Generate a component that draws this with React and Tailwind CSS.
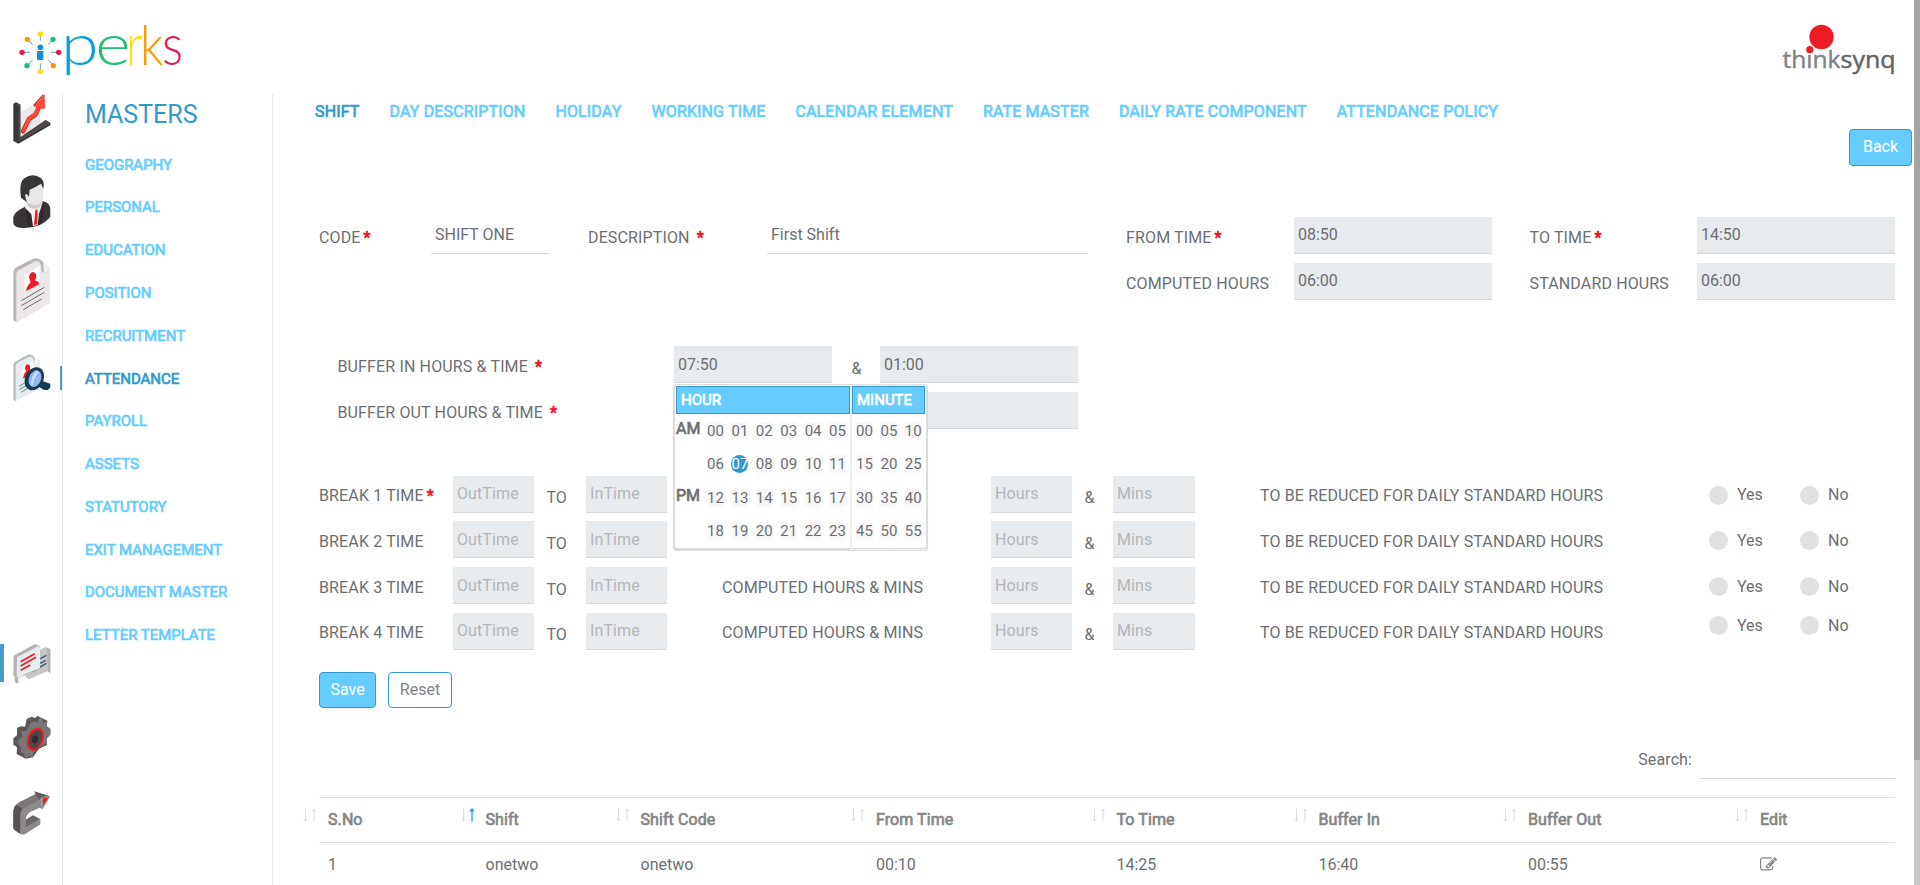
const fauxBold = "font-normal [-webkit-text-stroke:0.7px_currentColor]";

const menu = [
  "GEOGRAPHY", "PERSONAL", "EDUCATION", "POSITION", "RECRUITMENT", "ATTENDANCE",
  "PAYROLL", "ASSETS", "STATUTORY", "EXIT MANAGEMENT", "DOCUMENT MASTER", "LETTER TEMPLATE",
];

const tabs = [
  "SHIFT", "DAY DESCRIPTION", "HOLIDAY", "WORKING TIME", "CALENDAR ELEMENT",
  "RATE MASTER", "DAILY RATE COMPONENT", "ATTENDANCE POLICY",
];

function PerksLogo() {
  const nodes = [
    [121, 102, "#ffdd15", 121, 122], [159, 118, "#1fbf75", 144, 134],
    [176, 157, "#e6194b", 153, 157], [160, 197, "#ff9800", 146, 181],
    [121, 214, "#ffdd15", 121, 190], [81, 197, "#1fbf75", 97, 181],
    [66, 157, "#e6194b", 90, 157], [82, 118, "#ff9800", 98, 134],
  ];
  return (
    <svg className="h-[84px] w-[170px]" viewBox="54 0 510 252">
      {nodes.map(([x, y, c, a, b]) => (
        <g key={`${x}-${y}`}>
          <line x1={x} y1={y} x2={a} y2={b} stroke="#3f7fd0" strokeWidth="2.5" />
          <circle cx={x} cy={y} r="8" fill={c} />
        </g>
      ))}
      <circle cx="121" cy="142" r="8.5" fill="#1c8ad6" />
      <rect x="111" y="153" width="19" height="27" rx="3" fill="#1c8ad6" />
      <g fontFamily="Lato" fontWeight="300" fontSize="173">
        <text x="183" y="194" fill="#0d9ddb" textLength="113" lengthAdjust="spacingAndGlyphs">p</text>
        <text x="286" y="194" fill="#1fbf75" textLength="106" lengthAdjust="spacingAndGlyphs">e</text>
        <text x="378" y="195" fill="#ffdd15" textLength="50" lengthAdjust="spacingAndGlyphs">r</text>
        <text x="420" y="195" fill="#ff9800" fontSize="163" textLength="70" lengthAdjust="spacingAndGlyphs">k</text>
        <text x="486" y="194" fill="#e6194b" textLength="63" lengthAdjust="spacingAndGlyphs">s</text>
      </g>
    </svg>
  );
}

function ThinksynqLogo() {
  return (
    <svg className="h-[56px] w-[116px]" viewBox="0 0 116 56">
      <circle cx="40.5" cy="17" r="12.2" fill="#ed1c24" />
      <g fontFamily="Open Sans" fontSize="24">
        <text x="1.5" y="48" fill="#808285" stroke="#808285" strokeWidth="0.4" textLength="58" lengthAdjust="spacingAndGlyphs">thınk</text>
        <text x="59.5" y="48" fill="#636569" stroke="#636569" strokeWidth="0.5" textLength="55" lengthAdjust="spacingAndGlyphs">synq</text>
      </g>
      <circle cx="28.8" cy="29.7" r="3.6" fill="#ed1c24" />
    </svg>
  );
}

function ChartIcon() {
  return (
    <svg className="h-[50px] w-[38px]" viewBox="38 282 114 150">
      <path d="M58 337 L120 305 V384 L58 416Z" fill="#ece8ea" />
      <path d="M39 311 L47 307 L60 314 V412 L136 360 L150 369 V376 L54 431 L39 423Z" fill="#3b3638" />
      <path d="M47 307 L60 314 V411 L54 415 V319 L41 311Z" fill="#4d4749" />
      <path d="M54 416 L136 361 L150 369 L55 425Z" fill="#514b4d" />
      <path d="M68 394 L86 357 L106 343 L117 318" fill="none" stroke="#c93428" strokeWidth="14" strokeLinejoin="round" strokeLinecap="round" />
      <path d="M70 391 L87 354 L107 340 L118 314" fill="none" stroke="#ff4a38" strokeWidth="10" strokeLinejoin="round" strokeLinecap="round" />
      <path d="M102 320 L133 283 L134 325 L127 327Z" fill="#ff4a38" />
      <path d="M102 320 L131 284 L126 284 L99 314Z" fill="#c93428" />
    </svg>
  );
}

function PersonIcon() {
  return (
    <svg className="h-[54px] w-[38px]" viewBox="38 524 114 162">
      <path d="M39 651 Q42 633 78 618 L128 603 Q150 606 150 630 V650 Q122 683 72 683 Q39 683 39 668Z" fill="#393436" />
      <path d="M79 606 L126 596 L124 632 L112 674 L94 678 L74 624Z" fill="#f5f3f4" />
      <path d="M76 568 Q100 542 130 548 L129 590 Q122 617 104 617 Q84 610 74 590Z" fill="#e9e6e7" />
      <path d="M76 598 Q92 622 120 610 L126 602 V612 Q112 634 84 620Z" fill="#cfcbcd" />
      <path d="M62 592 Q55 545 72 534 Q98 516 122 534 Q133 543 129 565 L122 550 Q110 558 88 568 L86 590 Q78 574 74 586 L80 606Z" fill="#393436" />
      <path d="M105 629 L111 627 L112 640 L110 672 L101 674 L104 642Z" fill="#ed1c24" />
      <path d="M74 622 L93 642 L98 678 L84 680Z M126 610 L116 640 L112 674 L124 670 L132 620Z" fill="#2f2b2d" />
    </svg>
  );
}

function ProfileIcon() {
  return (
    <svg className="h-[65px] w-[38px]" viewBox="38 56 114 195">
      <path d="M39 100 Q39 89 50 83 L98 58 Q115 54 128 68 L132 98 L60 238 L50 249 L39 243Z" fill="#bab6b8" />
      <path d="M48 104 Q48 97 56 92 L104 66 Q120 64 122 80 L124 101 L148 90 V192 L52 248 Q48 248 48 242Z" fill="#ebe7e9" />
      <path d="M130 70 L150 88 L133 102 Q129 100 130 90Z" fill="#f3f1f2" stroke="#cfcbcd" strokeWidth="1.5" />
      <path d="M73 106 L118 80 V134 L73 158Z" fill="#fff" />
      <ellipse cx="97" cy="112" rx="10.500" ry="14" transform="rotate(14 97 112)" fill="#ed1c24" />
      <path d="M77 156 Q80 134 97 126 Q112 120 117 134Z" fill="#ed1c24" />
      <path d="M90 120 H104 V132 H90Z" fill="#ed1c24" />
      <path d="M63 184 L132 144 M63 199 L132 159 M69 211 L124 179" stroke="#6e6a6c" strokeWidth="3" />
    </svg>
  );
}

function SearchProfileIcon() {
  return (
    <svg className="h-[48px] w-[38px]" viewBox="38 341 114 144">
      <path d="M39 374 Q39 366 48 362 L82 343 Q98 340 105 356 L60 470 L46 483 L39 478Z" fill="#b5bfc2" />
      <path d="M46 378 Q46 370 54 366 L86 350 Q100 348 101 366 L119 360 V446 L46 482Z" fill="#e6edef" />
      <path d="M106 352 L120 362 L106 374Z" fill="#f2f5f6" />
      <path d="M65 378 L97 360 V396 L65 414Z" fill="#fff" />
      <ellipse cx="82" cy="382" rx="7.500" ry="10.500" fill="#ed1c24" />
      <path d="M68 414 Q71 394 82 390 L92 394 L88 410Z" fill="#ed1c24" />
      <path d="M57 438 L76 426 M57 448 L80 434 M62 456 L80 445" stroke="#5c8791" strokeWidth="3" />
      <path d="M119 420 L150 430 V442 L141 450 L130 448 L110 436Z" fill="#173b4d" />
      <ellipse cx="104" cy="415" rx="26" ry="35" transform="rotate(22 104 415)" fill="#1f4459" />
      <ellipse cx="100" cy="416" rx="26" ry="35" transform="rotate(22 100 416)" fill="#173b4d" />
      <ellipse cx="104" cy="415" rx="18" ry="26" transform="rotate(22 104 415)" fill="#8fb4f0" />
      <path d="M91 432 Q91 410 108 392 L116 396 Q100 414 97 438Z" fill="#c3dbff" />
    </svg>
  );
}

function ChatIcon() {
  return (
    <svg className="h-[40px] w-[38px]" viewBox="38 492 114 120">
      <path d="M76 530 L136 501 L150 508 V580 L140 574 L86 598 L75 590Z" fill="#c6c6c6" />
      <path d="M139 503 L150 508 V580 L143 574Z" fill="#b2b2b2" />
      <path d="M120 536 L138 526 M120 550 L136 541 M96 575 L138 550" stroke="#36617f" strokeWidth="4.500" />
      <path d="M40 527 L104 492 L119 498 V566 L62 590 L53 611 L43 606 V590 L39 586Z" fill="#b4b4b4" />
      <path d="M50 532 L115 498 Q119 498 119 503 V564 L72 583 Q62 588 58 602 L53 611 V592 L49 588Z" fill="#e4ecee" />
      <path d="M61 545 L103 521 M61 558 L107 532 M61 571 L90 555" stroke="#ed1c24" strokeWidth="5" />
    </svg>
  );
}

function GearIcon() {
  return (
    <svg className="h-[43px] w-[38px]" viewBox="38 708 114 129">
      <path d="M79 717 L94 710 L104 714 L112 708 L141 722 L139 739 L150 746 V764 L138 776 L140 795 L116 806 L98 832 L76 836 L49 822 L50 802 L39 794 V775 L50 766 L50 743 L63 739 L74 740Z" fill="#5c585a" />
      <path d="M92 728 L103 723 L109 729 L118 713 L127 714 L128 729 L141 724 L139 740 L150 748 V764 L139 774 L140 790 L127 796 L116 804 L100 818 L96 834 L87 826 L76 836 L70 818 L60 820 L62 803 L54 792 L54 780 L66 770 L63 754 L78 752Z" fill="#7a7577" />
      <ellipse cx="105" cy="778" rx="24" ry="36" transform="rotate(22 105 778)" fill="#ed1c24" />
      <ellipse cx="105" cy="778" rx="18" ry="29" transform="rotate(22 105 778)" fill="#4b4749" />
      <ellipse cx="104" cy="778" rx="9" ry="12" transform="rotate(22 104 778)" fill="#2f2b2d" />
    </svg>
  );
}

function ExitIcon() {
  return (
    <svg className="h-[44px] w-[38px]" viewBox="38 932 114 132">
      <path d="M39 996 Q40 974 58 965 L106 941 L122 957 L88 996 Q76 1004 76 1018 V1060 Q64 1064 56 1058 L42 1048 Q39 1046 39 1040Z" fill="#7b7678" />
      <path d="M39 996 Q40 980 47 974 L66 985 Q60 992 60 1002 V1060 L42 1048 Q39 1046 39 1040Z" fill="#575254" />
      <path d="M60 1002 Q62 986 78 979 L122 957 L126 987 L118 982 L88 996 Q76 1004 76 1018 V1036 L120 1016 V1032 L76 1060 Q66 1063 60 1060Z" fill="#8e898b" />
      <path d="M76 1018 L98 1005 L120 1016 L76 1040Z" fill="#6a6567" />
      <path d="M102 933 L150 948 L126 950 L118 958 L106 943Z" fill="#5e595b" />
      <path d="M150 948 L126 987 L122 950Z" fill="#8e898b" />
      <path d="M129 952 L143 954 L128 975Z" fill="#ed1c24" />
    </svg>
  );
}

function EditIcon() {
  return (
    <svg className="h-[17px] w-[17px]" viewBox="0 0 1792 1792" fill="#868686">
      <path d="M888 1184l116-116-152-152-116 116v56h96v96h56zm440-720q-16-16-33 1l-350 350q-17 17-1 33t33-1l350-350q17-17 1-33zm80 594v190q0 119-84.500 203.500t-203.500 84.500h-832q-119 0-203.500-84.500t-84.500-203.500v-832q0-119 84.500-203.500t203.500-84.500h832q63 0 117 25 15 7 18 23 3 17-9 29l-49 49q-14 14-32 8-23-6-45-6h-832q-66 0-113 47t-47 113v832q0 66 47 113t113 47h832q66 0 113-47t47-113v-126q0-13 9-22l64-64q15-15 35-7t20 29zm-96-738l288 288-672 672h-288v-288zm444 132l-92 92-288-288 92-92q28-28 68-28t68 28l152 152q28 28 28 68t-28 68z" />
    </svg>
  );
}

function IconRail() {
  return (
    <aside className="flex w-[63px] shrink-0 flex-col border-r border-[#e8e8e8]">
      <div className="pl-[13px]"><ChartIcon /></div>
      <div className="mt-[31px] pl-[13px]"><PersonIcon /></div>
      <div className="mt-[29px] pl-[13px]"><ProfileIcon /></div>
      <div className="mt-[31px] flex items-center justify-between pl-[13px]">
        <SearchProfileIcon />
        <span className="h-6 w-0.5 bg-[#4a9cc8]" />
      </div>
      <div className="mt-[242px] flex items-start">
        <span className="mr-[9px] h-[38px] w-1 bg-[#4a9cc8]" />
        <ChatIcon />
      </div>
      <div className="mt-[32px] pl-[13px]"><GearIcon /></div>
      <div className="mt-[32px] pl-[13px]"><ExitIcon /></div>
    </aside>
  );
}

function Star({ gap }) {
  return <span className={`${fauxBold} ${gap ? "ml-[7px]" : "ml-[3px]"} text-[#f01020]`}>*</span>;
}

function Label({ w, children, star, gap, top = "pt-[9px]" }) {
  return (
    <div className={`${w} ${top} shrink-0 tracking-[0.140px] whitespace-nowrap`}>
      {children}
      {star && <Star gap={gap} />}
    </div>
  );
}

function Box({ w, children, placeholder, plain, top = "pt-[6px]" }) {
  return (
    <div
      className={`${w} ${top} h-[37px] shrink-0 border-b border-[#d5d8da] pl-[4px] whitespace-nowrap ${plain ? "" : "bg-[#e8ebee]"} ${placeholder ? "tracking-[0.100px] text-[#b3b7bb]" : ""}`}
    >
      {children}
    </div>
  );
}

function Radio({ label, w }) {
  return (
    <span className={`${w} flex items-center gap-[9px]`}>
      <span className="h-[19px] w-[19px] rounded-full bg-[#e1e1e1]" />
      {label}
    </span>
  );
}

const hourRows = [
  ["AM", ["00", "01", "02", "03", "04", "05"]],
  ["", ["06", "07", "08", "09", "10", "11"]],
  ["PM", ["12", "13", "14", "15", "16", "17"]],
  ["", ["18", "19", "20", "21", "22", "23"]],
];
const minuteRows = [["00", "05", "10"], ["15", "20", "25"], ["30", "35", "40"], ["45", "50", "55"]];

function Cell({ value, on }) {
  return (
    <span className={`flex h-[18px] w-[17px] justify-center text-[15px] leading-[18px] ${on ? "rounded-full bg-[#3399cc] text-white" : "bg-[#f8f8f8]"}`}>
      {value}
    </span>
  );
}

function PickerHead({ children }) {
  return (
    <div className="mb-2 h-7 shrink-0 border border-[#3399cc] bg-[#66ccff] pl-[4px] text-[15px] leading-[26px] font-normal text-white [-webkit-text-stroke:0.7px_currentColor]">
      {children}
    </div>
  );
}

function TimePicker() {
  return (
    <div className="absolute top-[38px] left-0 z-10 flex h-[165px] w-[253px] gap-0.5 rounded-[3px] border border-[#dcdcdc] bg-white p-px pb-0 shadow-[0_1px_1px_1px_#d9d9d9]">
      <div className="flex h-[163px] w-[174px] flex-col">
        <PickerHead>HOUR</PickerHead>
        {hourRows.map(([tag, row]) => (
          <div key={row[0]} className="flex h-[33.400px] shrink-0 last:h-[26px]">
            <span className={`-mt-[5px] w-[31px] ${fauxBold}`}>{tag}</span>
            <div className="flex gap-[7.400px]">
              {row.map((v) => <Cell key={v} value={v} on={v === "07"} />)}
            </div>
          </div>
        ))}
      </div>
      <div className="flex h-[163px] w-[73px] flex-col shadow-[-1px_0_0_1px_#f0f0f0]">
        <PickerHead>MINUTE</PickerHead>
        {minuteRows.map((row) => (
          <div key={row[0]} className="flex h-[33.400px] shrink-0 gap-[7.400px] pl-[4px] last:h-[26px]">
            {row.map((v) => <Cell key={v} value={v} />)}
          </div>
        ))}
      </div>
    </div>
  );
}

function BreakRow({ n }) {
  return (
    <div className="flex h-[45.800px] items-start">
      <Label w="w-[134px]" top="pt-[8.600px]" star={n === 1}>BREAK {n} TIME</Label>
      <Box w="w-[81px]" top="pt-[6.500px]" placeholder>OutTime</Box>
      <div className="w-[52px] pt-[10.600px] pl-[12.500px]">TO</div>
      <Box w="w-[81px]" top="pt-[6.500px]" placeholder>InTime</Box>
      <Label w="w-[324px] pl-[55px]" top="pt-[8.600px]">{n > 2 && <>COMPUTED HOURS &amp; MINS</>}</Label>
      <Box w="w-[81px]" top="pt-[6.500px]" placeholder>Hours</Box>
      <div className="w-[41px] pt-[10.600px] pl-[12.500px]">&amp;</div>
      <Box w="w-[82px]" top="pt-[6.500px]" placeholder>Mins</Box>
      <Label w="w-[514px] pl-[65px]" top="pt-[8.600px]">TO BE REDUCED FOR DAILY STANDARD HOURS</Label>
      <div className={`flex ${n === 4 ? "pt-[1px]" : "pt-[7.700px]"}`}>
        <Radio w="w-[91px]" label="Yes" />
        <Radio w="w-[67px]" label="No" />
      </div>
    </div>
  );
}

function SortMark({ active }) {
  return (
    <svg className="-mt-[9px] mr-[11px] h-[14px] w-[14px] shrink-0" viewBox="0 0 14 14" fill="none">
      <path d="M2.500 0.500 V13 M0.500 10.500 L2.500 13 L4.500 10.500" stroke="#dcdcdc" />
      <path d="M11 13.500 V1 M9 3.500 L11 1 L13 3.500" stroke={active ? "#3399cc" : "#dcdcdc"} strokeWidth={active ? 1.3 : 1} />
    </svg>
  );
}

const columns = [
  ["S.No", "1", "w-[157.500px]"],
  ["Shift", "onetwo", "w-[155px]"],
  ["Shift Code", "onetwo", "w-[235.500px]"],
  ["From Time", "00:10", "w-[240.500px]"],
  ["To Time", "14:25", "w-[202px]"],
  ["Buffer In", "16:40", "w-[209.500px]"],
  ["Buffer Out", "00:55", "w-[232px]"],
  ["Edit", null, "w-[134px]"],
];

export default function App() {
  return (
    <div className="flex h-[885px] w-full overflow-hidden bg-white font-[Roboto,sans-serif] text-[16px] leading-6 text-[#6c6f72]">
      <div className="flex min-w-0 flex-1 flex-col">
        <header className="flex h-[94px] shrink-0 items-start justify-between pr-[17px] pl-[18px]">
          <PerksLogo />
          <div className="pt-[20px]"><ThinksynqLogo /></div>
        </header>
        <div className="flex min-h-0 flex-1">
          <IconRail />
          <nav className="flex w-[210px] shrink-0 flex-col border-r border-[#e8e8e8] pl-[22px] whitespace-nowrap">
            <h1 className="mt-[5px] mb-[16.700px] text-[25px] leading-[32px] text-[#3399cc]">MASTERS</h1>
            {menu.map((m) => (
              <a key={m} className={`h-[42.770px] text-[15px] leading-[34px] tracking-[-0.030px] ${fauxBold} ${m === "ATTENDANCE" ? "text-[#3399cc]" : "text-[#66ccff]"}`}>
                {m}
              </a>
            ))}
          </nav>
          <main className="flex min-w-0 flex-1 flex-col">
            <div className="flex h-[35px] shrink-0 gap-[30px] pt-[6px] pl-[42px] tracking-[0.140px] whitespace-nowrap">
              {tabs.map((t, i) => (
                <a key={t} className={`${fauxBold} ${i === 0 ? "text-[#3399cc]" : "text-[#66ccff]"}`}>{t}</a>
              ))}
            </div>
            <div className="flex h-[88px] shrink-0 justify-end pr-[2px]">
              <button className="h-[37px] w-[63px] rounded-[4px] border border-[#3399cc] bg-[#66ccff] pb-0.5 text-white">Back</button>
            </div>
            <div className="flex flex-1 flex-col pl-[46px]">
              <section className="flex h-[129px] shrink-0">
                <Label w="w-[112px]" star>CODE</Label>
                <Box w="w-[119px]" plain>SHIFT ONE</Box>
                <Label w="w-[217px] pl-[38px]" star gap>DESCRIPTION</Label>
                <Box w="w-[321px]" plain>First Shift</Box>
                <div className="flex flex-col gap-[9px] pl-[38px]">
                  <div className="flex">
                    <Label w="w-[168px]" star>FROM TIME</Label>
                    <Box w="w-[198px]">08:50</Box>
                    <Label w="w-[205px] pl-[37.500px]" star>TO TIME</Label>
                    <Box w="w-[198px]">14:50</Box>
                  </div>
                  <div className="flex">
                    <Label w="w-[168px]">COMPUTED HOURS</Label>
                    <Box w="w-[198px]">06:00</Box>
                    <Label w="w-[205px] pl-[37.500px]">STANDARD HOURS</Label>
                    <Box w="w-[198px]">06:00</Box>
                  </div>
                </div>
              </section>
              <section className="flex h-[129.500px] shrink-0 flex-col gap-[9px] pl-[18px]">
                <div className="flex">
                  <Label w="w-[337px] pl-[0.500px]" star gap>BUFFER IN HOURS &amp; TIME</Label>
                  <div className="relative">
                    <Box w="w-[158px]" top="pt-[7px]">07:50</Box>
                    <TimePicker />
                  </div>
                  <div className="w-[48px] pt-[11px] pl-[19.500px]">&amp;</div>
                  <Box w="w-[198px]" top="pt-[7px]">01:00</Box>
                </div>
                <div className="flex">
                  <Label w="w-[337px] pl-[0.500px]" star gap>BUFFER OUT HOURS &amp; TIME</Label>
                  <Box w="w-[158px]" />
                  <Box w="ml-[48px] w-[198px]" />
                </div>
              </section>
              <section className="flex h-[196px] shrink-0 flex-col">
                {[1, 2, 3, 4].map((n) => <BreakRow key={n} n={n} />)}
              </section>
              <div className="flex h-[69px] shrink-0 gap-[12px]">
                <button className="h-[36px] w-[57px] rounded-[4px] border border-[#3399cc] bg-[#66ccff] text-white">Save</button>
                <button className="h-[36px] w-[64px] rounded-[4px] border border-[#3399cc] bg-white text-[#7f8284]">Reset</button>
              </div>
              <div className="mr-[19px] flex h-[56px] shrink-0 justify-end">
                <span className="mr-2 pt-[7px] tracking-[0.100px]">Search:</span>
                <span className="h-[38px] w-[195px] border-b border-[#d5d8da]" />
              </div>
              <div className="mr-[19px] flex h-[46px] shrink-0 items-center border-y border-[#dee1e5]">
                {columns.map(([h, , w], i) => (
                  <div key={h} className={`${w} -ml-[16px] mr-[16px] flex shrink-0 items-center tracking-[0.080px] whitespace-nowrap text-[#868686]`}>
                    <SortMark active={i === 1} />
                    <b className={fauxBold}>{h}</b>
                  </div>
                ))}
              </div>
              <div className="mr-[19px] flex h-[44px] shrink-0 items-center pl-[9px]">
                {columns.map(([h, v, w]) => (
                  <div key={h} className={`${w} shrink-0`}>{v || <EditIcon />}</div>
                ))}
              </div>
            </div>
          </main>
        </div>
      </div>
      <div className="w-[6px] shrink-0 bg-[#c8c8c8]">
        <div className="h-[760px] bg-[#a5a5a5]" />
      </div>
    </div>
  );
}
